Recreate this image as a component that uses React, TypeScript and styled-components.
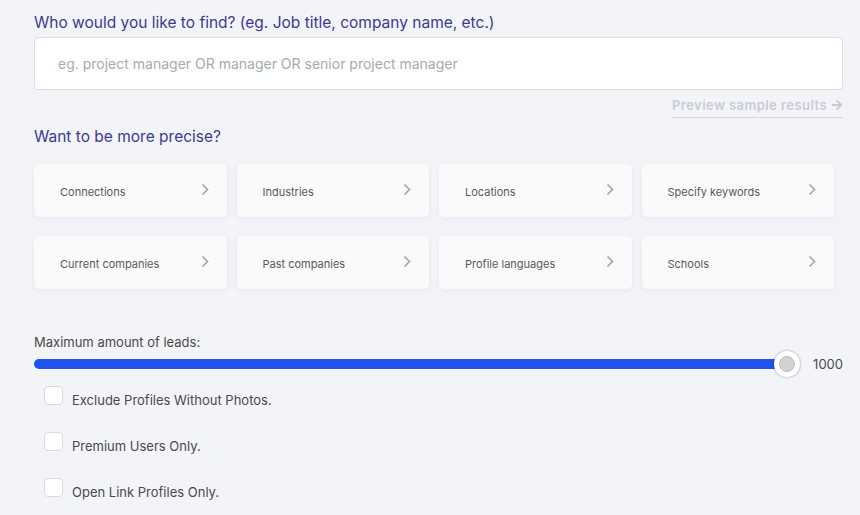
import React, { useState } from 'react';
import styled, { createGlobalStyle } from 'styled-components';
import { FaArrowRight } from 'react-icons/fa';

const GlobalStyle = createGlobalStyle`
  html, body {
    margin: 0;
    padding: 0;
    background: #f3f4f8;
    font-family: Inter, "Noto Sans", sans-serif;
  }
`;

const Page = styled.div`
  padding: 13px 17px 0 34px;
  width: 860px;
  box-sizing: border-box;
`;

const Heading = styled.h2`
  margin: 0;
  font-size: 15.5px;
  font-weight: 400;
  color: #3c3a8e;
  line-height: 20px;
`;

const SearchInput = styled.input`
  display: block;
  box-sizing: border-box;
  width: 809px;
  height: 53px;
  margin-top: 4px;
  padding: 0 23px;
  border: 1px solid #dcdde4;
  border-radius: 4px;
  background: #fff;
  font-family: inherit;
  font-size: 14px;
  color: #444;
  outline: none;

  &::placeholder {
    color: #a2adae;
  }
`;

const PreviewRow = styled.div`
  display: flex;
  justify-content: flex-end;
  width: 809px;
  margin-top: 7px;
`;

const PreviewLink = styled.a`
  display: inline-flex;
  align-items: center;
  gap: 4px;
  padding-bottom: 4px;
  border-bottom: 1px solid #d6d7e0;
  font-size: 13px;
  font-weight: 600;
  color: #c9cad9;
  text-decoration: none;
  letter-spacing: 0.45px;
`;

const SubHeading = styled(Heading)`
  margin-top: 9px;
`;

const Grid = styled.div`
  display: grid;
  grid-template-columns: repeat(4, 192.5px);
  column-gap: 10px;
  row-gap: 19px;
  margin-top: 17px;
`;

const Card = styled.button`
  display: flex;
  align-items: center;
  justify-content: space-between;
  height: 53px;
  padding: 2px 18px 0 26px;
  border: none;
  border-radius: 5px;
  background: #fafafa;
  box-shadow: 0 2px 6px rgba(40, 45, 80, 0.05);
  font-family: inherit;
  font-size: 11px;
  color: #585a5c;
  cursor: pointer;
  text-align: left;
`;

const Chevron = styled.svg`
  width: 8px;
  height: 13px;
  margin-top: -5px;
`;

const SliderBlock = styled.div`
  margin-top: 45px;
  width: 809px;
`;

const SliderLabel = styled.div`
  font-size: 13px;
  color: #4a4a4a;
`;

const SliderRow = styled.div`
  display: flex;
  align-items: center;
  height: 28px;
`;

const Track = styled.div`
  position: relative;
  flex: 1;
  height: 10px;
  border-radius: 5px;
  background: #1f55ee;
  margin-right: 25px;
`;

const Thumb = styled.div`
  position: absolute;
  top: 50%;
  width: 26px;
  height: 26px;
  margin-left: -13px;
  margin-top: -13px;
  border-radius: 50%;
  background: #fff;
  box-shadow: 0 0 3px rgba(0, 0, 0, 0.35);
  display: flex;
  align-items: center;
  justify-content: center;

  &::after {
    content: '';
    width: 16px;
    height: 16px;
    border-radius: 50%;
    background: #d2d2d2;
    border: 1px solid #bdbdbd;
    box-sizing: border-box;
  }
`;

const SliderValue = styled.span`
  width: 31px;
  font-size: 13px;
  color: #4a4a4a;
  text-align: right;
`;

const Options = styled.div`
  display: flex;
  flex-direction: column;
  gap: 25px;
  margin-top: 11px;
  padding-left: 10px;
`;

const OptionLabel = styled.label`
  display: flex;
  align-items: flex-start;
  gap: 9px;
  font-size: 13px;
  color: #4a4a4a;
  cursor: pointer;
`;

const Box = styled.span<{ $checked: boolean }>`
  width: 19px;
  height: 19px;
  box-sizing: border-box;
  border: 1px solid #d9dade;
  border-radius: 4px;
  background: ${(p) => (p.$checked ? '#1f55ee' : '#fff')};
  margin-top: -3px;
`;

const OptionText = styled.span`
  line-height: 20px;
  margin-top: 1px;
`;

const FILTERS = [
  'Connections',
  'Industries',
  'Locations',
  'Specify keywords',
  'Current companies',
  'Past companies',
  'Profile languages',
  'Schools',
];

const OPTIONS = ['Exclude Profiles Without Photos.', 'Premium Users Only.', 'Open Link Profiles Only.'];

function App() {
  const [checked, setChecked] = useState<boolean[]>([false, false, false]);
  const value = 1000;
  const max = 1000;

  const toggle = (i: number) => setChecked((c) => c.map((v, j) => (j === i ? !v : v)));

  return (
    <Page>
      <GlobalStyle />
      <Heading>Who would you like to find? (eg. Job title, company name, etc.)</Heading>
      <SearchInput placeholder="eg. project manager OR manager OR senior project manager" />
      <PreviewRow>
        <PreviewLink href="#">
          Preview sample results <FaArrowRight size={12} />
        </PreviewLink>
      </PreviewRow>
      <SubHeading>Want to be more precise?</SubHeading>
      <Grid>
        {FILTERS.map((f) => (
          <Card key={f}>
            {f}
            <Chevron viewBox="0 0 8 13">
              <path d="M1.5 1.5 L6.5 6.5 L1.5 11.5" fill="none" stroke="#9ca7aa" strokeWidth="1.6" />
            </Chevron>
          </Card>
        ))}
      </Grid>
      <SliderBlock>
        <SliderLabel>Maximum amount of leads:</SliderLabel>
        <SliderRow>
          <Track>
            <Thumb style={{ left: `${(value / max) * 100}%` }} />
          </Track>
          <SliderValue>{value}</SliderValue>
        </SliderRow>
      </SliderBlock>
      <Options>
        {OPTIONS.map((o, i) => (
          <OptionLabel key={o} onClick={() => toggle(i)}>
            <Box $checked={checked[i]} />
            <OptionText>{o}</OptionText>
          </OptionLabel>
        ))}
      </Options>
    </Page>
  );
}

export default App;
